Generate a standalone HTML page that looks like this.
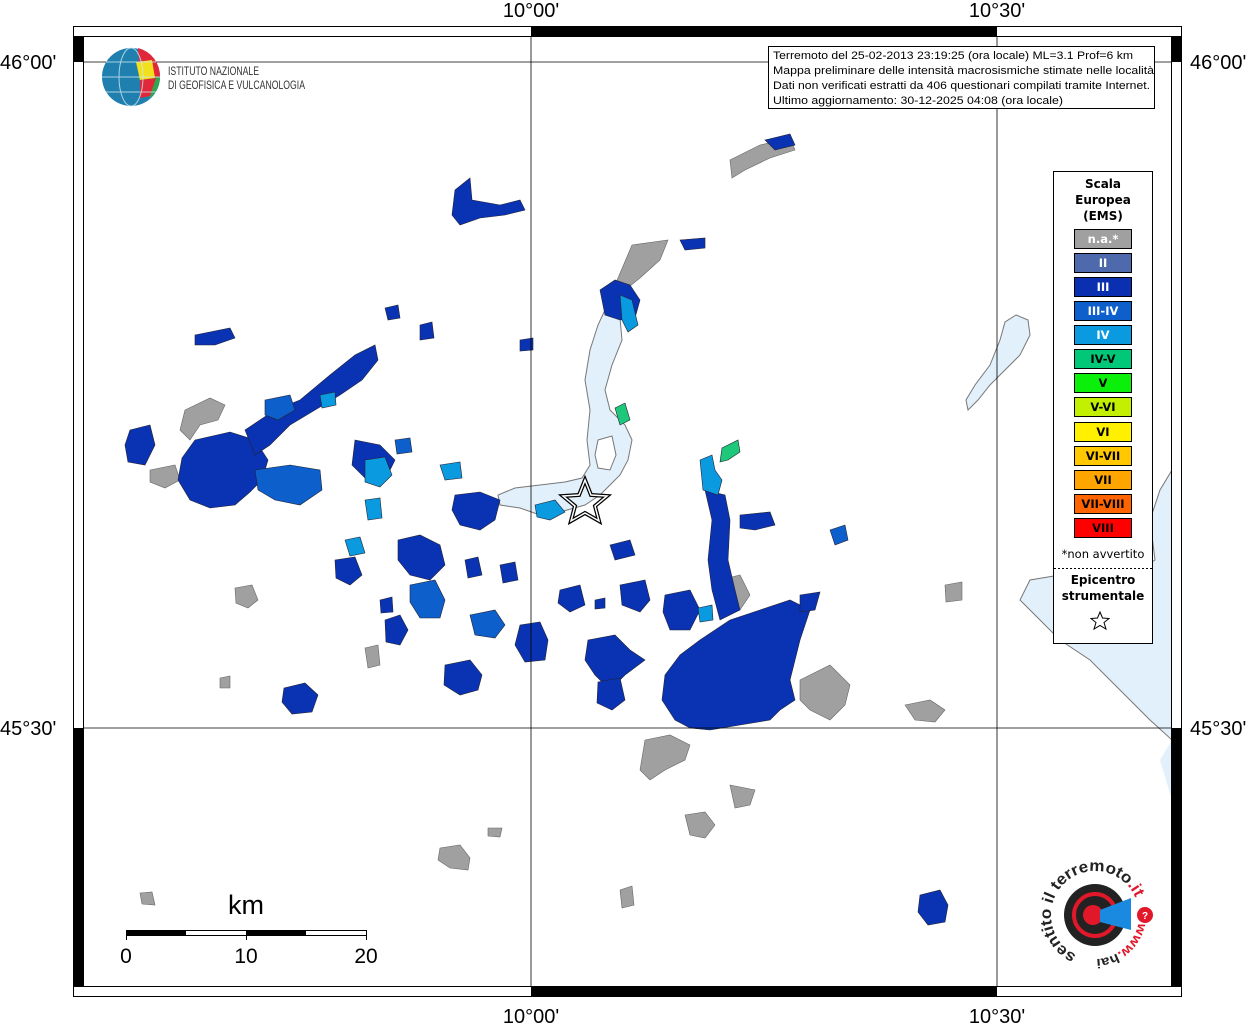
<!DOCTYPE html>
<html><head><meta charset="utf-8"><style>
body{margin:0;background:#fff;width:1255px;height:1024px;overflow:hidden}
svg{display:block}
</style></head><body>
<svg width="1255" height="1024" viewBox="0 0 1255 1024" xmlns="http://www.w3.org/2000/svg" font-family="Liberation Sans, sans-serif">
<defs><clipPath id="m"><rect x="83" y="36" width="1089" height="951"/></clipPath>
<path id="arc1" d="M1076.4 954.9 A44 44 0 1 1 1136.3 900"/>
<path id="arc2" d="M1138.3 922.6 A44 44 0 0 1 1083.6 957.5"/>
</defs>
<rect width="1255" height="1024" fill="#fff"/>
<g clip-path="url(#m)">
<!-- lakes -->
<path d="M1172 470 L1160 490 1150 520 1155 560 1140 570 1120 580 1060 575 1030 580 1020 600 1040 620 1060 640 1090 660 1120 690 1150 720 1172 740 Z" fill="#e1f0fb" stroke="#777" stroke-width="1"/>
<path d="M1172 740 L1160 760 1172 800Z" fill="#e1f0fb"/>
<path d="M1016 315 L1028 320 1030 335 1020 355 1005 370 990 385 978 400 968 410 966 400 975 385 990 365 1000 340 1005 322Z" fill="#e1f0fb" stroke="#777" stroke-width="1"/>
<path d="M612 305 L620 318 622 340 612 365 605 390 610 410 625 425 632 440 628 460 620 475 610 485 600 495 585 505 560 512 540 515 520 508 500 505 498 495 515 488 540 485 565 482 582 478 590 465 587 440 590 410 585 380 590 350 598 325 605 310Z" fill="#e1f0fb" stroke="#777" stroke-width="1"/>
<path d="M598 440 L612 436 616 455 610 470 598 468 595 455Z" fill="#fff" stroke="#777" stroke-width="1"/>
<!-- gray areas -->
<g fill="#a0a0a0" stroke="#666" stroke-width="0.6">
<path d="M185 410 L210 398 225 405 218 420 200 425 190 440 180 430Z"/>
<path d="M150 470 L175 465 180 480 165 488 150 482Z"/>
<path d="M720 580 L740 575 750 595 740 610 725 600Z"/>
<path d="M800 680 L830 665 850 685 845 705 830 720 810 710 800 700Z"/>
<path d="M905 705 L930 700 945 710 935 722 915 720Z"/>
<path d="M645 740 L670 735 690 745 685 760 665 770 650 780 640 770Z"/>
<path d="M730 785 L755 790 750 805 735 808Z"/>
<path d="M685 815 L705 812 715 825 705 838 690 835Z"/>
<path d="M440 848 L460 845 470 858 468 870 450 868 438 860Z"/>
<path d="M620 890 L632 886 634 905 622 908Z"/>
<path d="M235 588 L252 585 258 600 248 608 236 603Z"/>
<path d="M365 648 L378 645 380 665 368 668Z"/>
<path d="M140 893 L152 892 155 905 142 904Z"/>
<path d="M730 160 L760 145 790 138 795 150 770 158 745 170 732 178Z"/>
<path d="M945 585 L962 582 962 600 946 602Z"/>
<path d="M632 245 L668 240 660 260 640 278 625 290 615 285Z"/>
<path d="M220 678 L230 676 230 688 220 688Z"/>
<path d="M488 828 L502 828 500 837 488 836Z"/>
</g>
<!-- blue areas -->
<g fill="#0a33b3" stroke="#223" stroke-width="0.6">
<path d="M195 440 L230 432 255 440 268 460 262 480 250 492 235 505 210 508 190 500 178 480 182 458Z"/>
<path d="M245 430 L275 410 300 400 330 375 355 355 375 345 378 360 362 380 340 395 315 410 290 425 270 445 255 455Z"/>
<path d="M130 430 L150 425 155 445 145 465 128 462 125 445Z"/>
<path d="M700 640 L730 620 760 610 790 600 810 610 800 640 790 680 795 700 780 710 770 720 740 725 710 730 690 728 675 720 662 700 665 675 680 655Z"/>
<path d="M705 490 L725 495 730 520 728 560 735 590 740 610 720 620 712 590 708 560 712 520Z"/>
<path d="M588 640 L615 635 630 650 645 660 625 675 610 690 595 675 585 660Z"/>
<path d="M598 682 L620 678 625 700 612 710 597 703Z"/>
<path d="M445 665 L470 660 482 675 478 690 460 695 444 685Z"/>
<path d="M284 688 L305 683 318 695 312 712 292 714 282 702Z"/>
<path d="M520 625 L540 622 548 640 545 660 525 662 515 645Z"/>
<path d="M398 540 L420 535 440 545 445 565 430 580 410 575 398 560Z"/>
<path d="M455 495 L480 492 500 500 495 520 480 530 460 525 452 510Z"/>
<path d="M335 560 L355 557 362 575 350 585 336 578Z"/>
<path d="M385 620 L400 615 408 630 400 645 386 642Z"/>
<path d="M455 190 L470 178 472 200 500 205 520 200 525 210 505 215 480 218 460 225 452 215Z"/>
<path d="M600 290 L615 280 630 285 640 300 635 318 620 320 605 315Z"/>
<path d="M195 335 L230 328 235 338 215 345 195 345Z"/>
<path d="M680 240 L705 238 705 248 685 250Z"/>
<path d="M765 140 L790 134 795 145 775 150Z"/>
<path d="M920 895 L940 890 948 905 945 922 928 925 918 912Z"/>
<path d="M355 440 L380 445 395 460 385 480 365 478 352 465Z"/>
<path d="M560 590 L580 585 585 605 570 612 558 603Z"/>
<path d="M620 585 L645 580 650 600 640 612 622 605Z"/>
<path d="M665 595 L690 590 700 610 690 630 670 630 663 612Z"/>
<path d="M740 515 L770 512 775 525 755 530 740 528Z"/>
<path d="M800 595 L820 592 815 610 800 612Z"/>
<path d="M420 325 L432 322 434 338 420 340Z"/>
<path d="M500 565 L515 562 518 580 503 583Z"/>
<path d="M465 560 L478 557 482 575 468 578Z"/>
<path d="M380 600 L392 597 393 612 381 613Z"/>
<path d="M610 545 L630 540 635 555 615 560Z"/>
<path d="M520 340 L533 338 533 350 520 351Z"/>
<path d="M385 308 L398 305 400 318 388 320Z"/>
<path d="M595 600 L605 598 605 608 595 609Z"/>
</g>
<g fill="#0d5fcc" stroke="#223" stroke-width="0.6">
<path d="M255 470 L290 465 320 470 322 490 300 505 275 500 258 490Z"/>
<path d="M265 400 L290 395 295 410 278 420 265 415Z"/>
<path d="M410 585 L435 580 445 600 440 618 420 618 410 602Z"/>
<path d="M470 615 L495 610 505 625 495 638 475 635Z"/>
<path d="M830 530 L845 525 848 540 835 545Z"/>
<path d="M395 440 L410 438 412 452 397 454Z"/>
</g>
<g fill="#0a9ae0" stroke="#223" stroke-width="0.6">
<path d="M365 460 L385 457 392 475 380 487 365 482Z"/>
<path d="M345 540 L360 537 365 553 350 556Z"/>
<path d="M365 500 L380 498 382 518 368 520Z"/>
<path d="M440 465 L460 462 462 478 445 480Z"/>
<path d="M700 460 L712 455 715 470 722 480 718 495 703 490Z"/>
<path d="M535 505 L555 500 565 512 550 520 537 517Z"/>
<path d="M320 395 L335 392 336 405 322 408Z"/>
<path d="M698 608 L712 605 713 620 700 622Z"/>
<path d="M620 295 L632 300 638 325 628 332 622 320Z"/>
</g>
<g fill="#1ec87a" stroke="#223" stroke-width="0.6">
<path d="M615 408 L625 403 630 420 620 425Z"/>
<path d="M722 448 L738 440 740 452 728 460 720 462Z"/>
</g>
<!-- grid -->
<g stroke="#000" stroke-width="0.8" fill="none">
<line x1="531" y1="36" x2="531" y2="987"/>
<line x1="997" y1="36" x2="997" y2="987"/>
<line x1="83" y1="62" x2="1172" y2="62"/>
<line x1="83" y1="728" x2="1172" y2="728"/>
</g>
<!-- epicenter star -->
<path d="M585 480 L591 495 607 496 595 506 599 521 585 513 571 521 575 506 563 496 579 495Z" fill="none" stroke="#000" stroke-width="4"/>
<path d="M585 480 L591 495 607 496 595 506 599 521 585 513 571 521 575 506 563 496 579 495Z" fill="none" stroke="#fff" stroke-width="1.5"/>
</g>
<!-- frame -->
<rect x="73.5" y="26.5" width="1108" height="970" fill="none" stroke="#000" stroke-width="1"/>
<rect x="83.5" y="36.5" width="1088" height="950" fill="none" stroke="#000" stroke-width="1"/>
<rect x="531" y="26" width="466" height="10" fill="#000"/>
<rect x="531" y="987" width="466" height="10" fill="#000"/>
<rect x="73" y="36" width="10" height="26" fill="#000"/>
<rect x="73" y="728" width="10" height="259" fill="#000"/>
<rect x="1172" y="36" width="10" height="26" fill="#000"/>
<rect x="1172" y="728" width="10" height="259" fill="#000"/>
<g font-size="20" fill="#000">
<text x="531" y="17" text-anchor="middle">10°00'</text>
<text x="997" y="17" text-anchor="middle">10°30'</text>
<text x="531" y="1023" text-anchor="middle">10°00'</text>
<text x="997" y="1023" text-anchor="middle">10°30'</text>
<text x="0" y="69">46°00'</text>
<text x="1190" y="69">46°00'</text>
<text x="0" y="735">45°30'</text>
<text x="1190" y="735">45°30'</text>
</g>
<!-- INGV logo -->
<circle cx="131" cy="77" r="29" fill="#1f7fae"/>
<path d="M138 48 A29 29 0 0 1 160 77 L140 77Z" fill="#e0283a"/>
<path d="M138 77 L160 77 A29 29 0 0 1 150 98Z" fill="#2ea84a"/>
<path d="M136 62 L152 60 155 78 140 80Z" fill="#f2e01a"/>
<path d="M140 80 L156 78 150 96 140 98Z" fill="#e0283a"/>
<g stroke="#cfe8f2" stroke-width="1" fill="none" opacity=".8"><ellipse cx="131" cy="77" rx="12" ry="29"/><path d="M102 77 H160 M106 62 H156 M106 92 H156"/></g>
<text x="168" y="75" font-size="12" fill="#333" textLength="91" lengthAdjust="spacingAndGlyphs">ISTITUTO NAZIONALE</text>
<text x="168" y="89" font-size="12" fill="#333" textLength="137" lengthAdjust="spacingAndGlyphs">DI GEOFISICA E VULCANOLOGIA</text>
<!-- info box -->
<rect x="768.5" y="46.5" width="386" height="62" fill="#fff" stroke="#000"/>
<g font-size="11" fill="#000">
<text x="773" y="59" textLength="360" lengthAdjust="spacingAndGlyphs">Terremoto del 25-02-2013 23:19:25 (ora locale) ML=3.1 Prof=6 km</text>
<text x="773" y="74" textLength="381" lengthAdjust="spacingAndGlyphs">Mappa preliminare delle intensità macrosismiche stimate nelle località</text>
<text x="773" y="89" textLength="377" lengthAdjust="spacingAndGlyphs">Dati non verificati estratti da 406 questionari compilati tramite Internet.</text>
<text x="773" y="104" textLength="290" lengthAdjust="spacingAndGlyphs">Ultimo aggiornamento: 30-12-2025 04:08 (ora locale)</text>
</g>
<!-- legend -->
<rect x="1053.5" y="171.5" width="99" height="472" fill="#fff" stroke="#000"/>
<g font-family="DejaVu Sans, sans-serif" font-weight="bold" font-size="12" text-anchor="middle">
<text x="1103" y="188">Scala</text><text x="1103" y="204">Europea</text><text x="1103" y="220">(EMS)</text>
</g>
<g stroke="#000" stroke-width="1">
<rect x="1074.5" y="229.5" width="57" height="19" fill="#a0a0a0"/>
<rect x="1074.5" y="253.5" width="57" height="19" fill="#4e6aad"/>
<rect x="1074.5" y="277.5" width="57" height="19" fill="#0a2fb0"/>
<rect x="1074.5" y="301.5" width="57" height="19" fill="#0d5fcc"/>
<rect x="1074.5" y="325.5" width="57" height="19" fill="#0a9ae0"/>
<rect x="1074.5" y="349.5" width="57" height="19" fill="#00c878"/>
<rect x="1074.5" y="373.5" width="57" height="19" fill="#0af00a"/>
<rect x="1074.5" y="397.5" width="57" height="19" fill="#c2f000"/>
<rect x="1074.5" y="422.5" width="57" height="19" fill="#fff000"/>
<rect x="1074.5" y="446.5" width="57" height="19" fill="#ffc800"/>
<rect x="1074.5" y="470.5" width="57" height="19" fill="#ffa500"/>
<rect x="1074.5" y="494.5" width="57" height="19" fill="#ff6400"/>
<rect x="1074.5" y="518.5" width="57" height="19" fill="#ff0000"/>
</g>
<g font-family="DejaVu Sans, sans-serif" font-weight="bold" font-size="11.5" text-anchor="middle">
<text x="1103" y="243" fill="#fff">n.a.*</text>
<text x="1103" y="267" fill="#fff">II</text>
<text x="1103" y="291" fill="#fff">III</text>
<text x="1103" y="315" fill="#fff">III-IV</text>
<text x="1103" y="339" fill="#fff">IV</text>
<text x="1103" y="363">IV-V</text>
<text x="1103" y="387">V</text>
<text x="1103" y="411">V-VI</text>
<text x="1103" y="436">VI</text>
<text x="1103" y="460">VI-VII</text>
<text x="1103" y="484">VII</text>
<text x="1103" y="508">VII-VIII</text>
<text x="1103" y="532">VIII</text>
</g>
<text x="1103" y="558" font-family="DejaVu Sans, sans-serif" font-size="11.5" text-anchor="middle">*non avvertito</text>
<line x1="1054" y1="568.5" x2="1152" y2="568.5" stroke="#000" stroke-dasharray="2,2"/>
<g font-family="DejaVu Sans, sans-serif" font-weight="bold" font-size="12" text-anchor="middle">
<text x="1103" y="584">Epicentro</text><text x="1103" y="600">strumentale</text>
</g>
<path d="M1100 612 L1102.5 618 1109 618.5 1104 622.5 1106 629 1100 625.5 1094 629 1096 622.5 1091 618.5 1097.5 618Z" fill="none" stroke="#000"/>
<!-- scale bar -->
<text x="246" y="914" font-size="27" text-anchor="middle">km</text>
<rect x="126.5" y="930.5" width="240" height="5" fill="#fff" stroke="#000"/>
<rect x="126" y="930" width="60" height="6" fill="#000"/>
<rect x="246" y="930" width="60" height="6" fill="#000"/>
<g stroke="#000"><line x1="126.5" y1="930" x2="126.5" y2="940"/><line x1="246.5" y1="930" x2="246.5" y2="940"/><line x1="366.5" y1="930" x2="366.5" y2="940"/></g>
<g font-size="21" text-anchor="middle"><text x="126" y="963">0</text><text x="246" y="963">10</text><text x="366" y="963">20</text></g>
<!-- haisentito logo -->
<circle cx="1095" cy="915" r="31" fill="#222"/>
<circle cx="1095" cy="915" r="21" fill="none" stroke="#e0182a" stroke-width="4"/>
<circle cx="1093" cy="915" r="10" fill="#e0182a"/>
<path d="M1100 910 L1131 898 1131 930 1100 922Z" fill="#1a8ae0"/>
<circle cx="1145" cy="915" r="8" fill="#e0182a"/>
<text x="1145" y="919" font-size="10" fill="#fff" font-weight="bold" text-anchor="middle">?</text>
<text font-size="16" font-weight="bold" fill="#222"><textPath href="#arc1" textLength="170" lengthAdjust="spacingAndGlyphs">sentito il terremoto<tspan fill="#e0182a">.it</tspan></textPath></text>
<text font-size="13" font-weight="bold" fill="#222"><textPath href="#arc2" textLength="60" lengthAdjust="spacingAndGlyphs"><tspan fill="#e0182a">www.</tspan>hai</textPath></text>
</svg>
</body></html>
